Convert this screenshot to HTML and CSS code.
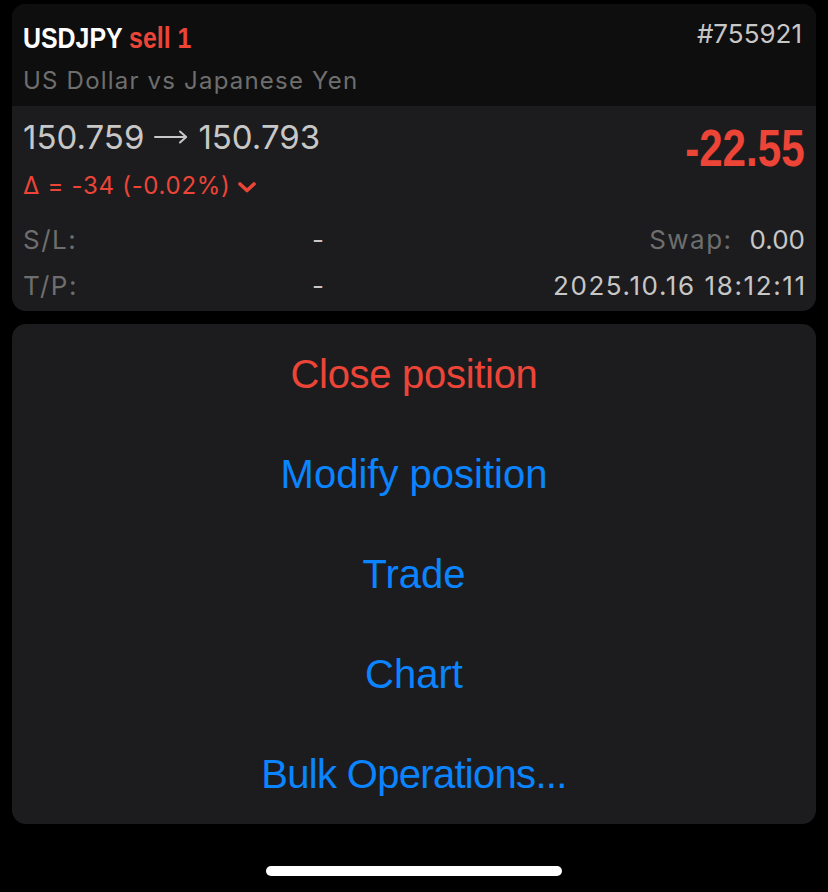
FILE: index.html
```html
<!DOCTYPE html>
<html lang="en">
<head>
<meta charset="utf-8">
<title>USDJPY position</title>
<link rel="stylesheet" href="styles.css">
</head>
<body>
<div class="screen">
  <section class="position-card">
    <header class="pc-head">
      <div class="head-row">
        <div class="title"><span class="sym">USDJPY</span> <span class="side">sell 1</span></div>
        <div class="ticket">#755921</div>
      </div>
      <div class="desc">US Dollar vs Japanese Yen</div>
    </header>
    <div class="pc-body">
      <div class="price-row">
        <div class="price-left">
          <div class="prices"><span>150.759</span><svg class="arrow" width="34" height="14" viewBox="0 0 34 14" aria-label="→"><path d="M1 7 H32 M26 1.5 L32.2 7 L26 12.5" fill="none" stroke="currentColor" stroke-width="2" stroke-linecap="round" stroke-linejoin="round"/></svg><span>150.793</span></div>
          <div class="delta">Δ = -34 (-0.02%)<svg class="chev" width="20" height="12" viewBox="0 0 20 12"><path d="M3 3 L10 9.5 L17 3" fill="none" stroke="currentColor" stroke-width="3.6" stroke-linecap="round" stroke-linejoin="round"/></svg></div>
        </div>
        <div class="profit">-22.55</div>
      </div>
      <div class="details">
        <div class="lbl">S/L:</div><div class="dash">-</div><div class="right"><span class="lbl">Swap:</span><span class="val swap">0.00</span></div>
        <div class="lbl">T/P:</div><div class="dash">-</div><div class="right"><span class="val date">2025.10.16 18:12:11</span></div>
      </div>
    </div>
  </section>
  <nav class="menu-card">
    <div class="menu-item danger">Close position</div>
    <div class="menu-item">Modify position</div>
    <div class="menu-item">Trade</div>
    <div class="menu-item">Chart</div>
    <div class="menu-item bulk">Bulk Operations...</div>
  </nav>
  <div class="home-indicator"></div>
</div>
</body>
</html>
```
FILE: styles.css
```css
html, body {
  margin: 0;
  padding: 0;
  background: #000;
}
body {
  font-family: "Liberation Sans", Arial, sans-serif;
  color: #c7c7c7;
}
.screen {
  width: 828px;
  height: 892px;
  padding: 4px 12px 0;
  box-sizing: border-box;
  display: flex;
  flex-direction: column;
}
.position-card {
  border-radius: 14px;
  overflow: hidden;
  background: #1c1c1e;
}
.pc-head {
  background: #0e0e0e;
  height: 102px;
  box-sizing: border-box;
  padding: 16px 14px 0 11px;
}
.head-row {
  display: flex;
  justify-content: space-between;
  align-items: flex-start;
}
.title {
  display: inline-block;
  font-weight: 700;
  font-size: 30px;
  line-height: 36px;
  color: #fff;
  transform: scaleX(0.83);
  transform-origin: left center;
  white-space: nowrap;
}
.side { color: #ec4538; }
.ticket {
  font-family: "Inter", "Liberation Sans", sans-serif;
  font-size: 26px;
  line-height: 27px;
  color: #c7c7c7;
}
.desc {
  margin-top: 10px;
  font-family: "Inter", "Liberation Sans", sans-serif;
  font-size: 24px;
  line-height: 30px;
  letter-spacing: 1.2px;
  color: #6e6e6e;
}
.pc-body {
  padding: 11px 11px 2px;
}
.price-row {
  display: flex;
  justify-content: space-between;
  align-items: flex-start;
}
.prices {
  display: flex;
  align-items: center;
  font-family: "Inter", "Liberation Sans", sans-serif;
  font-size: 33px;
  line-height: 40px;
  color: #c7c7c7;
}
.arrow {
  margin: 0 10px;
}
.delta {
  margin-top: 14px;
  font-family: "Inter", "Liberation Sans", sans-serif;
  font-size: 24px;
  line-height: 30px;
  letter-spacing: 0.7px;
  color: #ec4538;
  display: flex;
  align-items: center;
}
.chev {
  margin-left: 6px;
  margin-top: 2px;
}
.profit {
  display: inline-block;
  margin-top: 6px;
  font-weight: 700;
  font-size: 51px;
  line-height: 52px;
  color: #ec4538;
  transform: scaleX(0.826);
  transform-origin: right center;
}
.details {
  margin-top: 16px;
  display: grid;
  grid-template-columns: 280px 30px 1fr;
  grid-auto-rows: 46px;
  font-family: "Inter", "Liberation Sans", sans-serif;
  font-size: 26px;
  line-height: 46px;
}
.lbl {
  color: #6e6e6e;
  letter-spacing: 1.5px;
}
.dash {
  text-align: center;
  color: #c7c7c7;
}
.right {
  text-align: right;
}
.val { color: #c7c7c7; }
.swap {
  margin-left: 17px;
}
.date {
  letter-spacing: 1.6px;
  margin-right: -1.6px;
}
.menu-card {
  margin-top: 13px;
  background: #1c1c1e;
  border-radius: 14px;
  display: flex;
  flex-direction: column;
}
.menu-item {
  height: 100px;
  line-height: 100px;
  text-align: center;
  font-size: 40px;
  color: #0a84ff;
}
.menu-item.danger { color: #ec4538; letter-spacing: -0.3px; }
.menu-item.bulk { letter-spacing: -0.7px; }
.home-indicator {
  align-self: center;
  margin-top: 42px;
  width: 296px;
  height: 10px;
  border-radius: 5px;
  background: #fff;
}
```
